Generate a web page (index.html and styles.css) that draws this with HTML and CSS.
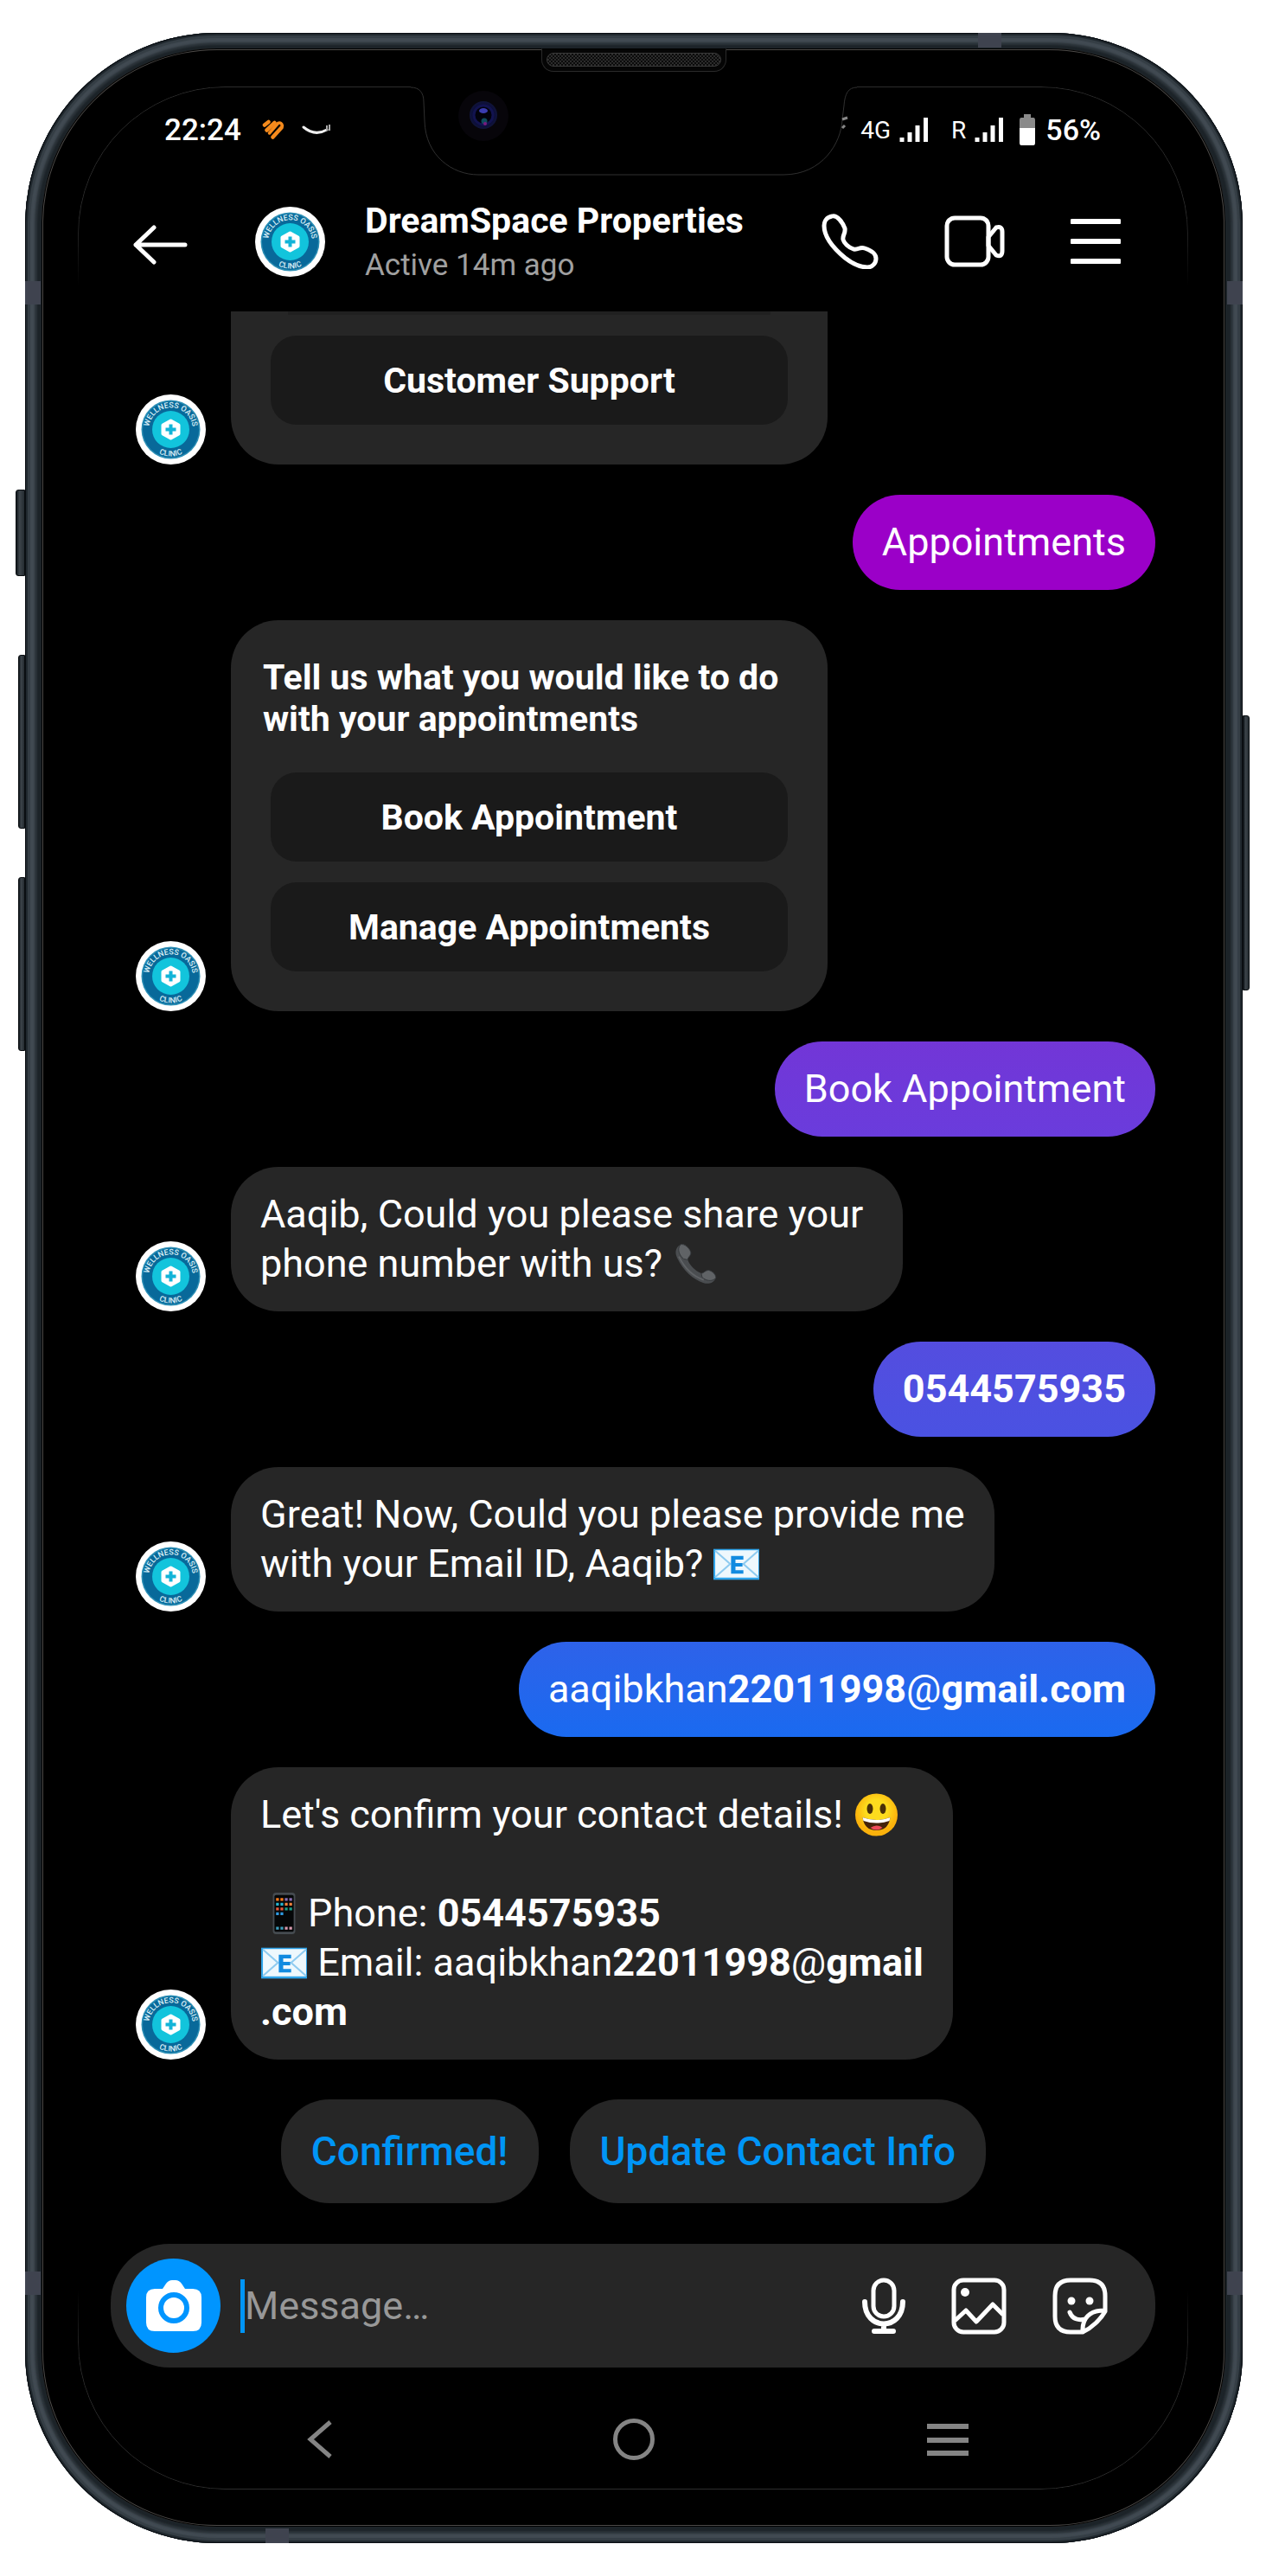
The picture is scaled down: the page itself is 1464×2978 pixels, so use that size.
FILE: index.html
```html
<!DOCTYPE html>
<html lang="en">
<head>
<meta charset="utf-8">
<meta name="viewport" content="width=device-width, initial-scale=1">
<title>DreamSpace Properties</title>
<link rel="stylesheet" href="styles.css">
</head>
<body>
<svg class="defs" aria-hidden="true">
  <defs>
    <path id="ring-top" d="M15.800 46a25.300 25.300 0 1 1 49.400 0"/>
    <path id="ring-bottom" d="M9.500 40.500a31 31 0 0 0 62 0"/>
    <symbol id="logo" viewBox="0 0 81 81">
      <circle cx="40.500" cy="40.500" r="40.500" fill="#fff"/>
      <circle cx="40.500" cy="40.500" r="34" fill="#2c8fb5"/>
      <circle cx="40.500" cy="40.500" r="32.500" fill="#08699a"/>
      <circle cx="40.500" cy="40.500" r="21.500" fill="#12c4dc"/>
      <path d="M40.500 30.500l9 5v10l-9 5-9-5v-10z" fill="#fff" stroke="#fff" stroke-width="4" stroke-linejoin="round"/>
      <path d="M40.500 34.500v12M34.500 40.500h12" stroke="#12b4d8" stroke-width="4"/>
    </symbol>
    <symbol id="envelope" viewBox="0 0 54 48">
      <rect x="1" y="7" width="52" height="35" fill="#2fa4ea"/>
      <rect x="3" y="8.500" width="49" height="31" fill="#eef8fd"/>
      <path d="M3 9l17 15L3 39M52 9L35 24l17 15" fill="none" stroke="#8ecbf0" stroke-width="2"/>
      <path d="M21 15h14v4h-9v4h8v4h-8v4h9v4H21z" fill="#128be0"/>
    </symbol>
    <symbol id="bars" viewBox="0 0 34 30">
      <path d="M3 24v5M12 18v11M21 10v19M30.500 1v28" stroke="#fff" stroke-width="5"/>
    </symbol>
  </defs>
</svg>

<main class="phone">
  <i class="key key-mute"></i><i class="key key-up"></i><i class="key key-down"></i><i class="key key-power"></i>
  <i class="band band-left-top"></i><i class="band band-left-bottom"></i>
  <i class="band band-right-top"></i><i class="band band-right-bottom"></i>
  <i class="band band-top"></i><i class="band band-bottom"></i>

  <div class="glass">
    <i class="display-edge"></i>
    <i class="speaker"></i>
    <svg class="notch" viewBox="0 0 520 104" aria-hidden="true">
      <defs>
        <radialGradient id="lens"><stop offset="0" stop-color="#05051a"/><stop offset=".6" stop-color="#0a0a38"/><stop offset="1" stop-color="#10143a"/></radialGradient>
      </defs>
      <path d="M2 1C12 1 17 7 17 18L18 40C19 80 50 102 80 102H433C478 102 500 65 501 38L503 22C504 8 508 1 518 1V0H2z" fill="#000"/>
      <path d="M2 1C12 1 17 7 17 18L18 40C19 80 50 102 80 102H433C478 102 500 65 501 38L503 22C504 8 508 1 518 1" fill="none" stroke="#303030"/>
      <circle cx="86" cy="34" r="29" fill="#07050a"/>
      <circle cx="86" cy="33" r="16" fill="url(#lens)"/>
      <circle cx="86" cy="33" r="11" fill="#02020c" stroke="#12134f" stroke-width="3"/>
      <ellipse cx="86" cy="28" rx="5" ry="3" fill="#3a3cb0"/>
      <circle cx="87" cy="40" r="3.500" fill="#0e4a5c"/>
      <circle cx="88" cy="43" r="2" fill="#7a1a7e"/>
      <path d="M501 38l6-2M501 48l3-3" stroke="#888" stroke-width="3"/>
    </svg>

    <div class="status">
      <div class="status-side">
        <span class="clock">22:24</span>
        <svg class="heart" viewBox="0 0 26 24" aria-hidden="true"><path d="M3 6.500L7.500 3M5.500 12.500L14.500 4M12.500 20.500L22.500 9.500" fill="none" stroke="#f58a1c" stroke-width="4.500" stroke-linecap="round"/><path d="M8.500 16L18.500 4.500q4-1.500 5 3" fill="none" stroke="#f58a1c" stroke-width="3.500" stroke-linecap="round" stroke-linejoin="round"/></svg>
        <svg class="smile" viewBox="0 0 34 14" aria-hidden="true"><path d="M2 4q13 11 27 3" fill="none" stroke="#eee" stroke-width="3" stroke-linecap="round"/><path d="M29 2v6M32 1v7" stroke="#aaa" stroke-width="2"/></svg>
      </div>
      <div class="status-side">
        <span class="net">4G</span><svg class="bars" aria-hidden="true"><use href="#bars"/></svg>
        <span class="net net-roam">R</span><svg class="bars" aria-hidden="true"><use href="#bars"/></svg>
        <svg class="battery" viewBox="0 0 18 36" aria-hidden="true"><path d="M5 4V0h8v4h3q2 0 2 3v10H0V7q0-3 2-3z" fill="#8a8a8a"/><path d="M0 16h18v17q0 3-2 3H2q-2 0-2-3z" fill="#fff"/></svg>
        <span class="percent">56%</span>
      </div>
    </div>

    <header class="header">
      <button class="icon-button back" type="button" aria-label="Back"><svg width="64" height="46" viewBox="0 0 64 46"><path d="M25 3L4 23l21 20M4 23h57" fill="none" stroke="#fff" stroke-width="5" stroke-linecap="round" stroke-linejoin="round"/></svg></button>
      <svg class="avatar" viewBox="0 0 81 81" role="img" aria-label="Business logo"><use href="#logo"/><text class="ring"><textPath href="#ring-top" startOffset="50%">WELLNESS OASIS</textPath></text><text class="ring"><textPath href="#ring-bottom" startOffset="50%">CLINIC</textPath></text></svg>
      <div class="who">
        <h1 class="name">DreamSpace Properties</h1>
        <p class="active">Active 14m ago</p>
      </div>
      <div class="actions">
        <button class="icon-button" type="button" aria-label="Call"><svg width="66" height="64" viewBox="0 0 66 64"><path d="M12 3C6 4 3 9 3 14c0 13 12 27 24 37 9 7 18 11 26 11 6 0 10-5 10-10 0-6-7-10-13-12-6-2-7 2-13 1-6-2-11-7-12-11-1-5 3-7 2-13C25 11 18 1 12 3z" fill="none" stroke="#fff" stroke-width="5" stroke-linejoin="round"/></svg></button>
        <button class="icon-button" type="button" aria-label="Video call"><svg width="70" height="60" viewBox="0 0 70 60"><rect x="3" y="3" width="48" height="54" rx="9" fill="none" stroke="#fff" stroke-width="5"/><path d="M51 25l9-11q7-2 7 5v22q0 8-7 5l-9-11z" fill="none" stroke="#fff" stroke-width="5" stroke-linejoin="round"/></svg></button>
        <button class="icon-button" type="button" aria-label="Menu"><svg width="58" height="56" viewBox="0 0 58 56"><path d="M2 5h54M2 28h54M2 51h54" stroke="#fff" stroke-width="6" stroke-linecap="round"/></svg></button>
      </div>
    </header>

    <section class="thread">
      <div class="row">
        <svg class="avatar" viewBox="0 0 81 81" aria-hidden="true"><use href="#logo"/><text class="ring"><textPath href="#ring-top" startOffset="50%">WELLNESS OASIS</textPath></text><text class="ring"><textPath href="#ring-bottom" startOffset="50%">CLINIC</textPath></text></svg>
        <div class="card card-cut">
          <div class="card-sliver"></div>
          <button class="option" type="button">Customer Support</button>
        </div>
      </div>

      <div class="row row-me"><p class="bubble me me-1">Appointments</p></div>

      <div class="row">
        <svg class="avatar" viewBox="0 0 81 81" aria-hidden="true"><use href="#logo"/><text class="ring"><textPath href="#ring-top" startOffset="50%">WELLNESS OASIS</textPath></text><text class="ring"><textPath href="#ring-bottom" startOffset="50%">CLINIC</textPath></text></svg>
        <div class="card">
          <p class="card-title">Tell us what you would like to do with your appointments</p>
          <button class="option" type="button">Book Appointment</button>
          <button class="option" type="button">Manage Appointments</button>
        </div>
      </div>

      <div class="row row-me"><p class="bubble me me-2">Book Appointment</p></div>

      <div class="row">
        <svg class="avatar" viewBox="0 0 81 81" aria-hidden="true"><use href="#logo"/><text class="ring"><textPath href="#ring-top" startOffset="50%">WELLNESS OASIS</textPath></text><text class="ring"><textPath href="#ring-bottom" startOffset="50%">CLINIC</textPath></text></svg>
        <p class="bubble bubble-roomy">Aaqib, Could you please share your<br>phone number with us? <svg class="emoji" viewBox="0 0 54 54" role="img" aria-label="Telephone receiver"><path d="M8 3C1 7 1 14 4 20c7 15 20 27 33 31 7 2 13-1 15-6 1-4-4-9-9-10-4 0-6 4-9 4C26 36 19 28 17 22c-1-3 3-4 4-8C21 9 13 0 8 3z" fill="#4a4d50"/><path d="M8 3c5-2 13 6 13 11-1 4-4 5-4 8l-5-1C7 17 3 9 8 3zM52 45c1-4-4-9-9-10-4 0-6 4-9 4l1 5c5 4 12 6 17 1z" fill="#606366" stroke="#34373a"/><path d="M6 18c7 14 18 25 31 29" fill="none" stroke="#606366" stroke-width="2"/></svg></p>
      </div>

      <div class="row row-me"><p class="bubble me me-3"><b>0544575935</b></p></div>

      <div class="row">
        <svg class="avatar" viewBox="0 0 81 81" aria-hidden="true"><use href="#logo"/><text class="ring"><textPath href="#ring-top" startOffset="50%">WELLNESS OASIS</textPath></text><text class="ring"><textPath href="#ring-bottom" startOffset="50%">CLINIC</textPath></text></svg>
        <p class="bubble">Great! Now, Could you please provide me<br>with your Email ID, Aaqib? <svg class="emoji" role="img" aria-label="E-mail"><use href="#envelope"/></svg></p>
      </div>

      <div class="row row-me"><p class="bubble me me-4">aaqibkhan<b>22011998</b>@<b>gmail.com</b></p></div>

      <div class="row">
        <svg class="avatar" viewBox="0 0 81 81" aria-hidden="true"><use href="#logo"/><text class="ring"><textPath href="#ring-top" startOffset="50%">WELLNESS OASIS</textPath></text><text class="ring"><textPath href="#ring-bottom" startOffset="50%">CLINIC</textPath></text></svg>
        <p class="bubble">Let's confirm your contact details! <svg class="emoji" viewBox="0 0 54 50" role="img" aria-label="Smiling face"><defs><radialGradient id="face" cy=".4"><stop offset=".5" stop-color="#fddc1e"/><stop offset="1" stop-color="#fbb20c"/></radialGradient></defs><circle cx="27" cy="25" r="24.500" fill="url(#face)"/><ellipse cx="19.500" cy="18" rx="3.500" ry="6" fill="#4a3008"/><ellipse cx="34.500" cy="18" rx="3.500" ry="6" fill="#4a3008"/><path d="M11 28q16 6 32 0-2 15-16 15T11 28z" fill="#45230a"/><path d="M11 28q16 6 32 0l-1 4q-15 5-30 0z" fill="#fff"/><path d="M20 40q7-5 14 0-7 5-14 0z" fill="#ee4b58"/></svg><br>
          <br>
          <svg class="emoji" viewBox="0 0 54 54" role="img" aria-label="Mobile phone"><rect x="13" y="1" width="28" height="52" rx="4" fill="#454b50"/><rect x="15" y="4" width="24" height="46" rx="2" fill="#050708"/><g stroke-width="3.500" stroke-dasharray="3.500 2"><path d="M17 9.500h9" stroke="#ff7b1c"/><path d="M28 9.500h9" stroke="#8b6fb5"/><path d="M17 15.500h9" stroke="#27b5cf"/><path d="M28 15.500h9" stroke="#f2813c"/><path d="M17 21.500h9" stroke="#e8593b"/><path d="M28 21.500h9" stroke="#1ba088"/><path d="M17 27.500h9" stroke="#2f9be3"/><path d="M17 45.500h9" stroke="#3d9fbd"/><path d="M28 45.500h9" stroke="#d79aae"/></g></svg>Phone: <b>0544575935</b><br>
          <svg class="emoji" role="img" aria-label="E-mail"><use href="#envelope"/></svg> Email: aaqibkhan<b>22011998</b>@<b>gmail<br>.com</b></p>
      </div>
    </section>

    <div class="replies">
      <button class="reply" type="button">Confirmed!</button>
      <button class="reply" type="button">Update Contact Info</button>
    </div>

    <form class="composer">
      <button class="camera" type="button" aria-label="Camera"><svg width="64" height="60" viewBox="0 0 64 60"><path d="M19 10l4-6q3-4 7-4h4q4 0 7 4l4 6h9q10 0 10 10v29q0 10-10 10H10Q0 59 0 49V20q0-10 10-10z" fill="#fff"/><circle cx="32" cy="32" r="15" fill="none" stroke="#0095ff" stroke-width="6"/></svg></button>
      <input class="message" type="text" placeholder="Message…" aria-label="Message">
      <button class="icon-button" type="button" aria-label="Voice message"><svg width="50" height="66" viewBox="0 0 50 66"><rect x="13" y="3" width="24" height="42" rx="12" fill="none" stroke="#fff" stroke-width="5"/><path d="M3 28c0 34 44 34 44 0M25 54v8M14 62h22" fill="none" stroke="#fff" stroke-width="6" stroke-linecap="round"/></svg></button>
      <button class="icon-button" type="button" aria-label="Gallery"><svg width="64" height="66" viewBox="0 0 64 66"><rect x="3" y="3" width="58" height="60" rx="11" fill="none" stroke="#fff" stroke-width="5"/><circle cx="16" cy="17" r="5" fill="#fff"/><path d="M4 50l13-12 12 13 19-20 12 12" fill="none" stroke="#fff" stroke-width="5" stroke-linejoin="round"/></svg></button>
      <button class="icon-button" type="button" aria-label="Stickers"><svg width="64" height="66" viewBox="0 0 64 66"><path d="M35 63H21Q3 63 3 45V21Q3 3 21 3h22q18 0 18 18v18C56 48 46 58 35 63zM35 63C34 47 43 38 60 38M20 40c3 8 10 10 18 8" fill="none" stroke="#fff" stroke-width="5" stroke-linejoin="round" stroke-linecap="round"/><circle cx="22" cy="27" r="4.500" fill="#fff"/><circle cx="43" cy="27" r="4.500" fill="#fff"/></svg></button>
    </form>

    <nav class="softkeys" aria-label="System">
      <button class="icon-button" type="button" aria-label="Go back"><svg width="32" height="46" viewBox="0 0 32 46"><path d="M28 3L5 23l23 20" fill="none" stroke="#848484" stroke-width="5"/></svg></button>
      <button class="icon-button" type="button" aria-label="Home"><svg width="50" height="50" viewBox="0 0 50 50"><circle cx="25" cy="25" r="21.500" fill="none" stroke="#848484" stroke-width="5"/></svg></button>
      <button class="icon-button" type="button" aria-label="Recent apps"><svg width="50" height="40" viewBox="0 0 50 40"><path d="M1 5h48M1 21h48M1 36h48" stroke="#848484" stroke-width="6"/></svg></button>
    </nav>
  </div>
</main>
</body>
</html>
```
FILE: styles.css
```css
* { box-sizing: border-box; }

body {
  margin: 0;
  padding: 38px 27px 39px 29px;
  background: #fff;
  color: #fff;
  font-family: Roboto, "Liberation Sans", sans-serif;
}

p, h1 { margin: 0; }
svg { display: block; flex: none; }
button { border: 0; padding: 0; font: inherit; color: inherit; }
.defs { position: absolute; width: 0; height: 0; }

/* Device body */
.phone {
  position: relative;
  padding: 18px 20px 19px 19px;
  border-radius: 222px;
  background: #1c2328;
  box-shadow:
    inset 0 0 0 1px #0a0e12,
    inset 0 0 0 3px #20282e,
    inset 0 0 1px 6px #353e45,
    inset 0 0 2px 11px #414a52,
    inset 0 0 2px 14px #2c343a;
}

.key {
  position: absolute;
  background: linear-gradient(90deg, #11171c, #3c444a 40%, #252c31);
  border: 1px solid #090d10;
}
.key-mute { left: -11px; top: 528px; width: 11px; height: 100px; border-radius: 3px 0 0 3px; }
.key-up { left: -8px; top: 719px; width: 8px; height: 201px; border-radius: 3px 0 0 3px; }
.key-down { left: -8px; top: 976px; width: 8px; height: 201px; border-radius: 3px 0 0 3px; }
.key-power { right: -8px; top: 789px; width: 8px; height: 318px; border-radius: 0 3px 3px 0; }

.band { position: absolute; width: 18px; height: 27px; background: #3f434f; }
.band-left-top { left: 0; top: 287px; }
.band-left-bottom { left: 0; bottom: 287px; }
.band-right-top { right: 0; top: 287px; }
.band-right-bottom { right: 0; bottom: 287px; }
.band-top { right: 279px; top: 0; width: 27px; height: 17px; }
.band-bottom { left: 278px; bottom: 0; width: 27px; height: 17px; }

.glass {
  position: relative;
  padding: 72px 0 61px;
  border-radius: 203px;
  background: #000;
  box-shadow: inset 0 0 0 1px #000, inset 0 0 0 2px #4c4a48;
}

.display-edge {
  position: absolute;
  inset: 44px 43px 43px 42px;
  border: 1px solid #2c2c2c;
  border-radius: 170px;
  mask-image: linear-gradient(#000 150px, transparent 230px, transparent calc(100% - 230px), #000 calc(100% - 150px));
  pointer-events: none;
}

.speaker {
  position: absolute;
  top: 0;
  left: 50%;
  width: 214px;
  height: 27px;
  margin-left: -107px;
  border: 1px solid #2a2a2a;
  border-top-color: #000;
  border-radius: 0 0 14px 14px;
  background: #050505;
}
.speaker::before {
  content: "";
  position: absolute;
  inset: 4px 5px 5px;
  border: 1px solid #3a3a3a;
  border-radius: 8px;
  background: repeating-conic-gradient(#2c2c2c 0 25%, #0b0b0b 0 50%) 0 0 / 4px 4px;
}

.notch {
  position: absolute;
  top: 44px;
  left: 50%;
  width: 520px;
  height: 104px;
  margin-left: -260px;
}

/* Status bar */
.status {
  display: flex;
  justify-content: space-between;
  height: 44px;
  margin-bottom: 26px;
  padding: 0 144px 0 142px;
}
.status-side { display: flex; align-items: center; }
.clock { font-size: 35px; font-weight: 500; }
.percent { margin-left: 12px; font-size: 34px; font-weight: 500; }
.net { margin-right: 10px; font-size: 28px; }
.net-roam { margin-left: 26px; }
.heart { width: 26px; height: 24px; margin-left: 24px; }
.smile { width: 34px; height: 14px; margin-left: 20px; }
.bars { width: 34px; height: 30px; }
.battery { width: 18px; height: 36px; margin-left: 18px; }

/* Conversation header */
.icon-button { flex: none; background: none; }
.header {
  display: flex;
  align-items: center;
  height: 162px;
  padding: 0 121px 0 105px;
}
.back { margin-right: 78px; padding-top: 8px; }
.avatar { width: 81px; height: 81px; }
.ring { fill: #d8eef6; font-size: 9px; font-weight: 500; text-anchor: middle; }
.who { flex: 1; margin-left: 46px; padding-top: 4px; }
.name { font-size: 41px; line-height: 52px; font-weight: 700; }
.active { color: #a0a0a0; font-size: 35px; line-height: 52px; }
.actions { display: flex; align-items: center; gap: 76px; }

/* Messages */
.thread {
  display: flex;
  flex-direction: column;
  gap: 35px;
  padding: 0 81px 0 109px;
}
.row { display: flex; align-items: flex-end; gap: 29px; }
.row-me { justify-content: flex-end; }

.bubble {
  padding: 26px 34px 27px;
  border-radius: 55px;
  background: #262626;
  font-size: 45px;
  line-height: 57px;
}
.bubble-roomy { padding-right: 46px; }
.me-1 { background: #9b00c8; }
.me-2 { background: linear-gradient(#7236d7, #6a3cdc); }
.me-3 { background: linear-gradient(#544ddf, #4a52e2); }
.me-4 { background: linear-gradient(#2e62e9, #1a6af0); }
.emoji { display: inline-block; width: 55px; height: 50px; vertical-align: -10px; }

.card {
  display: flex;
  flex-direction: column;
  gap: 24px;
  width: 690px;
  padding: 42px 46px 46px;
  border-radius: 55px;
  background: #262626;
}
.card-cut { padding-top: 0; border-radius: 0 0 55px 55px; }
.card-sliver { height: 4px; margin: 0 20px; background: #202020; }
.card-title {
  margin: 0 -9px 14px;
  font-size: 41px;
  line-height: 48px;
  font-weight: 700;
}
.option {
  height: 103px;
  border-radius: 30px;
  background: #1a1a1a;
  font-size: 41px;
  font-weight: 700;
}

.replies {
  display: flex;
  justify-content: center;
  gap: 36px;
  margin-top: 46px;
}
.reply {
  height: 120px;
  padding: 0 35px;
  border-radius: 56px;
  background: #262626;
  color: #0095f6;
  font-size: 46px;
  font-weight: 500;
}

/* Composer */
.composer {
  display: flex;
  align-items: center;
  gap: 53px;
  height: 143px;
  margin: 47px 81px 0 80px;
  padding: 0 55px 0 18px;
  border-radius: 68px;
  background: #262626;
}
.camera {
  display: grid;
  place-items: center;
  flex: none;
  width: 109px;
  height: 109px;
  margin-right: -30px;
  border-radius: 50%;
  background: #0095ff;
}
.message {
  flex: 1;
  min-width: 0;
  height: 62px;
  padding: 0;
  border: 0;
  border-left: 5px solid #0095f6;
  background: none;
  color: #fff;
  font: 45px Roboto, "Liberation Sans", sans-serif;
}
.message::placeholder { color: #989898; }

.softkeys {
  display: grid;
  grid-template-columns: repeat(3, 1fr);
  place-items: center;
  height: 80px;
  margin: 43px 140px 0;
}
```
